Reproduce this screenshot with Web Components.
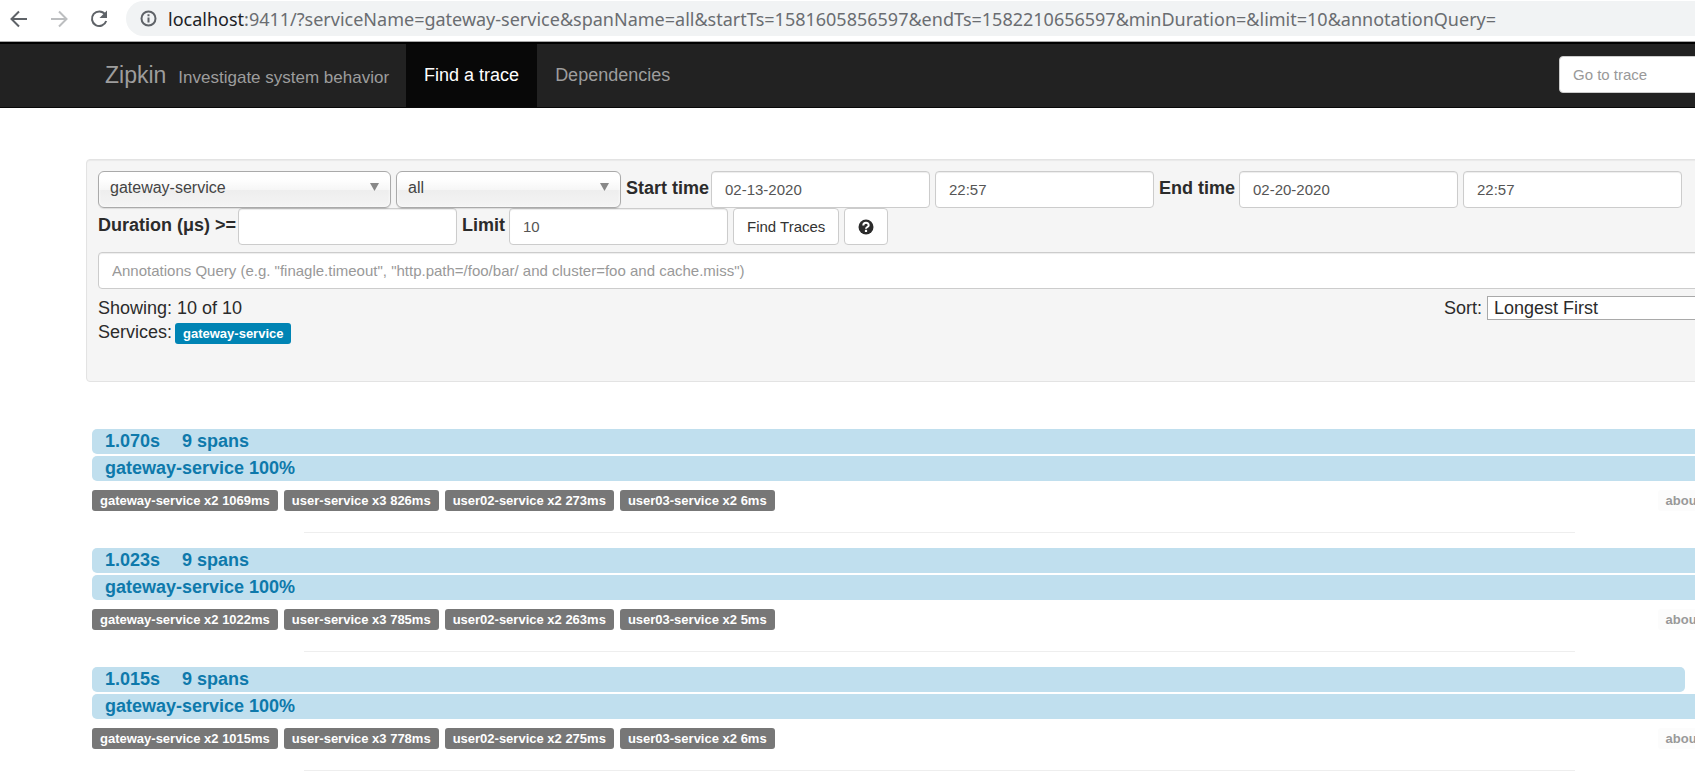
<!DOCTYPE html>
<html lang="en">
<head>
<meta charset="utf-8">
<title>Zipkin - Index</title>
<style>
  html { overflow: hidden; }
  body { margin: 0; background: #fff; color: #2b2b2b; font: 18px/24px "Liberation Sans", Arial, sans-serif; }
</style>
</head>
<body>
<address-bar host="localhost">:9411/?serviceName=gateway-service&amp;spanName=all&amp;startTs=1581605856597&amp;endTs=1582210656597&amp;minDuration=&amp;limit=10&amp;annotationQuery=</address-bar>
<nav-bar>
  <span slot="brand">Zipkin</span>
  <span slot="tagline">Investigate system behavior</span>
  <nav-item active>Find a trace</nav-item>
  <nav-item>Dependencies</nav-item>
</nav-bar>
<page-body>
  <search-panel></search-panel>
  <trace-row duration="1.070s" percent="100">
    <tag-label>gateway-service x2 1069ms</tag-label><tag-label>user-service x3 826ms</tag-label><tag-label>user02-service x2 273ms</tag-label><tag-label>user03-service x2 6ms</tag-label>
  </trace-row>
  <trace-row duration="1.023s" percent="95">
    <tag-label>gateway-service x2 1022ms</tag-label><tag-label>user-service x3 785ms</tag-label><tag-label>user02-service x2 263ms</tag-label><tag-label>user03-service x2 5ms</tag-label>
  </trace-row>
  <trace-row duration="1.015s" percent="94">
    <tag-label>gateway-service x2 1015ms</tag-label><tag-label>user-service x3 778ms</tag-label><tag-label>user02-service x2 275ms</tag-label><tag-label>user03-service x2 6ms</tag-label>
  </trace-row>
</page-body>

<script>
const define = (name, render) => customElements.define(name, class extends HTMLElement {
  constructor() {
    super();
    this.attachShadow({ mode: 'open' });
  }
  connectedCallback() {
    this.shadowRoot.innerHTML = '<style>*{box-sizing:border-box}</style>' + render(this);
  }
});

define('address-bar', el => `
<style>
  :host { display: flex; align-items: center; height: 42px; padding: 0 0 4px 9px; box-sizing: border-box; border-bottom: 1px solid #a6a6a6; overflow: hidden; }
  button { flex: none; width: 20px; height: 20px; margin-right: 20px; padding: 0; border: 0; background: none; color: #5f6368; }
  button:disabled { color: #bcbec0; }
  button.last { margin-right: 17px; }
  svg { display: block; }
  .pill { flex: 1; display: flex; align-items: center; height: 35px; margin-right: -20px; padding-left: 14px; gap: 11px; border-radius: 18px; background: #f1f3f4; color: #5f6368; }
  .url { font: 18px/24px "Noto Sans", sans-serif; white-space: nowrap; color: #6a6d71; }
  b { font-weight: 400; color: #202124; }
</style>
<button aria-label="Back"><svg width="20" height="20" viewBox="0 0 20 20" fill="none" stroke="currentColor" stroke-width="2"><path d="M18 10H3M10 2.500L2.500 10L10 17.500"/></svg></button>
<button aria-label="Forward" disabled><svg width="20" height="20" viewBox="0 0 20 20" fill="none" stroke="currentColor" stroke-width="2"><path d="M2 10H17M10 2.500L17.500 10L10 17.500"/></svg></button>
<button aria-label="Reload" class="last"><svg width="20" height="20" viewBox="0 0 20 20"><path d="M16 5.200A7.300 7.300 0 1 0 17.200 12" fill="none" stroke="currentColor" stroke-width="2"/><path d="M18 1.500V9H10.500Z" fill="currentColor"/></svg></button>
<div class="pill">
  <svg width="17" height="17" viewBox="0 0 17 17" fill="none" stroke="currentColor" stroke-width="2"><circle cx="8.500" cy="8.500" r="7"/><path d="M8.500 7.500V12.500M8.500 4.300V6.200"/></svg>
  <span class="url"><b>${el.getAttribute('host')}</b><slot></slot></span>
</div>`);

define('nav-bar', () => `
<style>
  :host { display: flex; height: 66px; box-sizing: border-box; padding-left: 105px; background: #222; border-top: 2px solid #000; border-bottom: 1px solid #080808; margin-right: -98px; }
  .brand { display: flex; align-items: baseline; gap: 12px; padding: 19px 17px 0 0; color: #9d9d9d; font-size: 23px; text-decoration: none; white-space: nowrap; }
  small { font-size: 17px; }
  nav { display: flex; flex: 1; }
  input { width: 219px; height: 37px; margin: 12px 15px 0 0; padding: 0 13px; border: 1px solid #ccc; border-radius: 4px; background: #fff; color: #555; font: 15px "Liberation Sans", Arial, sans-serif; }
  input::placeholder { color: #999; }
</style>
<a class="brand" href="#"><slot name="brand"></slot><small><slot name="tagline"></slot></small></a>
<nav><slot></slot></nav>
<input type="text" placeholder="Go to trace" aria-label="Go to trace">`);

define('nav-item', () => `
<style>
  :host { display: flex; }
  a { display: flex; align-items: center; padding: 0 18px 2px; color: #9d9d9d; text-decoration: none; white-space: nowrap; }
  :host([active]) a { background: #080808; color: #fff; }
</style>
<a href="#"><slot></slot></a>`);

define('page-body', () => `
<style>
  :host { display: block; margin: 51px -98px 0 86px; }
</style>
<slot></slot>`);

define('chosen-select', el => `
<style>
  :host { display: block; position: relative; height: 37px; }
  select { appearance: none; width: 100%; height: 100%; padding: 0 30px 4px 11px; border: 1px solid #aaa; border-radius: 6px; background: linear-gradient(#fff 20%, #f6f6f6 50%, #eee 52%, #f4f4f4 100%); box-shadow: 0 0 3px #fff inset, 0 1px 1px rgba(0,0,0,.1); color: #444; font: 16px "Liberation Sans", Arial, sans-serif; }
  i { position: absolute; right: 12px; top: 12px; width: 9px; height: 8px; background: #888; clip-path: polygon(0 0, 100% 0, 50% 100%); pointer-events: none; }
</style>
<select aria-label="${el.getAttribute('label')}"><option>${el.getAttribute('value')}</option></select><i></i>`);

define('text-field', el => `
<style>
  :host { display: flex; gap: 5px; }
  label { width: var(--label-width); padding-top: 5px; font-weight: 700; white-space: nowrap; }
  input { width: 219px; height: 37px; padding: 0 13px; border: 1px solid #ccc; border-radius: 4px; background: #fff; box-shadow: inset 0 1px 1px rgba(0,0,0,.075); color: #555; font: 15px "Liberation Sans", Arial, sans-serif; }
</style>
${el.hasAttribute('label') ? `<label for="field">${el.getAttribute('label')}</label>` : ''}
<input id="field" type="text" value="${el.getAttribute('value') || ''}" ${el.hasAttribute('hint') ? `aria-label="${el.getAttribute('hint')}"` : ''}>`);

define('tag-label', () => `
<style>
  :host { display: block; height: 21px; padding: 0 8px; border-radius: 3px; background: var(--tag-color, #777); color: var(--tag-ink, #fff); font-size: 13px; font-weight: 700; line-height: 21px; white-space: nowrap; }
</style>
<slot></slot>`);

define('search-panel', () => `
<style>
  :host { display: block; box-sizing: border-box; min-height: 223px; padding: 11px 11px 34px; border: 1px solid #e3e3e3; border-radius: 4px; background: #f5f5f5; box-shadow: inset 0 1px 1px rgba(0,0,0,.05); }
  form { display: flex; flex-wrap: wrap; gap: 0 5px; }
  .service { width: 293px; }
  .span { width: 225px; }
  .start { --label-width: 80px; }
  .end { --label-width: 75px; }
  .duration { --label-width: 135px; }
  .limit { --label-width: 42px; }
  button { height: 37px; padding: 0 13px; border: 1px solid #ccc; border-radius: 4px; background: #fff; color: #333; font: 15px "Liberation Sans", Arial, sans-serif; }
  button svg { display: block; }
  .query { flex: 1 0 100%; height: 37px; margin-top: 7px; padding: 0 13px; border: 1px solid #ccc; border-radius: 4px; background: #fff; box-shadow: inset 0 1px 1px rgba(0,0,0,.075); color: #555; font: 15px "Liberation Sans", Arial, sans-serif; }
  .query::placeholder { color: #999; }
  .summary { display: flex; justify-content: space-between; margin-top: 7px; }
  .services { display: flex; align-items: end; gap: 3px; --tag-color: #0084b4; }
  .sort { display: flex; gap: 5px; height: 24px; }
  select { appearance: none; width: 294px; height: 24px; padding: 0 6px; border: 1px solid #a9a9a9; border-radius: 0; background: #fff; color: #2b2b2b; font: inherit; line-height: 22px; }
</style>
<form>
  <chosen-select class="service" label="Service" value="gateway-service"></chosen-select>
  <chosen-select class="span" label="Span" value="all"></chosen-select>
  <text-field class="start" label="Start time" value="02-13-2020"></text-field>
  <text-field hint="Start hour" value="22:57"></text-field>
  <text-field class="end" label="End time" value="02-20-2020"></text-field>
  <text-field hint="End hour" value="22:57"></text-field>
  <text-field class="duration" label="Duration (μs) &gt;="></text-field>
  <text-field class="limit" label="Limit" value="10"></text-field>
  <button type="button">Find Traces</button>
  <button type="button" aria-label="Help"><svg width="16" height="16" viewBox="0 0 16 16"><circle cx="8" cy="8" r="7.500" fill="#2b2b2b"/><path d="M5.300 6.500C5.300 3 10.700 3 10.700 6.200C10.700 8 8 8 8 9.800" fill="none" stroke="#fff" stroke-width="2"/><path d="M6.900 10.800H9.100V13H6.900Z" fill="#fff"/></svg></button>
  <input class="query" type="text" aria-label="Annotations query" placeholder='Annotations Query (e.g. "finagle.timeout", "http.path=/foo/bar/ and cluster=foo and cache.miss")'>
</form>
<div class="summary">
  <div>
    <div>Showing: 10 of 10</div>
    <div class="services">Services: <tag-label>gateway-service</tag-label></div>
  </div>
  <div class="sort"><label for="sort">Sort:</label><select id="sort"><option>Longest First</option></select></div>
</div>`);

define('trace-row', el => `
<style>
  :host { display: block; margin: 0 6px 15px; }
  :host(:nth-of-type(1)) { margin-top: 47px; }
  a { display: flex; gap: 22px; height: 25px; margin-bottom: 2px; padding-left: 13px; border-radius: 5px; background: #c0dfee; color: #0e79ab; font-weight: 700; line-height: 25px; text-decoration: none; }
  .total { width: ${el.getAttribute('percent')}%; }
  .tags { display: flex; gap: 6px; padding-top: 7px; }
  .when { margin-left: auto; --tag-color: #fcfcfc; --tag-ink: #999; }
  hr { width: 75%; height: 1px; margin: 21px auto 0; border: 0; background: #eee; }
</style>
<a class="total" href="#"><span>${el.getAttribute('duration')}</span><span>9 spans</span></a>
<a href="#">gateway-service 100%</a>
<div class="tags"><slot></slot><tag-label class="when">about an hour ago</tag-label></div>
<hr>`);
</script>
</body>
</html>
